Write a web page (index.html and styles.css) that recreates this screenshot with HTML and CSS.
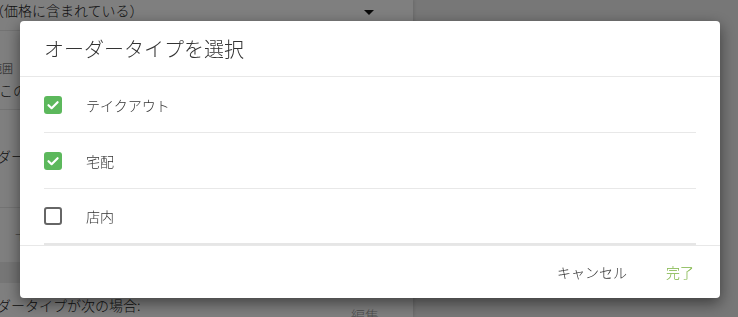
FILE: index.html
```html
<!DOCTYPE html>
<html lang="ja">
<head>
<meta charset="utf-8">
<title>オーダータイプを選択</title>
<link rel="stylesheet" href="styles.css">
</head>
<body>
<div class="app">
  <div class="page">
    <div class="row row-a">
      <span class="txt cut-a">（価格に含まれている）</span>
      <span class="caret"></span>
    </div>
    <div class="row row-b">
      <div class="label">範囲</div>
      <div class="txt cut-b">この</div>
    </div>
    <div class="row row-c">
      <div class="txt cut-c">オーダー</div>
    </div>
    <div class="row row-d">
      <div class="txt cut-d">十</div>
    </div>
    <div class="band"></div>
    <div class="row row-e">
      <div class="txt cut-c">オーダータイプが次の場合:</div>
      <div class="edit">編集</div>
    </div>
  </div>
</div>
<div class="backdrop"></div>
<div class="modal">
  <div class="modal-header">オーダータイプを選択</div>
  <div class="modal-list">
    <div class="item"><span class="cb on"><svg viewBox="0 0 18 18"><path d="M4.5 9.2 L7.6 12.2 L13.6 6.2"/></svg></span><span class="item-text">テイクアウト</span></div>
    <div class="item"><span class="cb on"><svg viewBox="0 0 18 18"><path d="M4.5 9.2 L7.6 12.2 L13.6 6.2"/></svg></span><span class="item-text">宅配</span></div>
    <div class="item"><span class="cb"></span><span class="item-text">店内</span></div>
  </div>
  <div class="modal-footer">
    <span class="btn cancel">キャンセル</span>
    <span class="btn done">完了</span>
  </div>
</div>
</body>
</html>
```
FILE: styles.css
```css
html, body {
  margin: 0;
  padding: 0;
}
body {
  width: 738px;
  height: 317px;
  overflow: hidden;
  background: #eeeeee;
  font-family: "Noto Sans CJK JP", "Noto Sans", sans-serif;
  color: #222;
}
.app {
  display: flex;
}
.page {
  width: 413px;
  height: 317px;
  background: #ffffff;
  overflow: hidden;
  display: flex;
  flex-direction: column;
  box-shadow: 1px 0 3px rgba(0,0,0,0.12);
}
.row {
  border-bottom: 1px solid #e6e6e6;
  display: flex;
  flex-direction: column;
  flex-shrink: 0;
}
.txt {
  font-size: 14px;
  line-height: 20px;
  white-space: nowrap;
  color: #222;
  font-weight: 300;
}
.row-a {
  height: 30px;
  flex-direction: row;
  justify-content: space-between;
}
.cut-a { margin-left: -10px; }
.caret {
  width: 0;
  height: 0;
  border-left: 5px solid transparent;
  border-right: 5px solid transparent;
  border-top: 5px solid #111;
  margin: 10px 39px 0 0;
}
.row-b {
  height: 48px;
  padding-top: 30px;
}
.label {
  font-size: 11px;
  line-height: 14px;
  color: #777;
  margin-left: -9px;
  margin-bottom: 5px;
}
.cut-b { margin-left: -1px; }
.row-c {
  height: 61px;
  padding-top: 36px;
}
.cut-c { margin-left: -31px; }
.row-d {
  height: 54px;
  justify-content: center;
  border-bottom: none;
}
.cut-d {
  margin-left: 15px;
  font-size: 11px;
  color: #555;
}
.band {
  height: 21px;
  background: #ececec;
  flex-shrink: 0;
}
.row-e {
  padding-top: 12px;
  border-bottom: none;
}
.edit {
  font-size: 14px;
  line-height: 20px;
  color: #999;
  margin: -10px 0 0 351px;
  font-weight: 300;
}
.backdrop {
  position: fixed;
  inset: 0;
  background: rgba(0,0,0,0.5);
}
.modal {
  position: fixed;
  top: 21px;
  left: 20px;
  width: 700px;
  height: 277px;
  background: #ffffff;
  border-radius: 4px;
  box-shadow: 0 5px 15px rgba(0,0,0,0.5);
  display: flex;
  flex-direction: column;
}
.modal-header {
  height: 55px;
  border-bottom: 1px solid #e8e8e8;
  padding-left: 24px;
  display: flex;
  align-items: center;
  font-size: 20px;
  font-weight: 300;
  color: #333;
}
.modal-list {
  border-bottom: 1px solid #e8e8e8;
}
.item {
  margin: 0 24px;
  height: 55px;
  border-bottom: 1px solid #e8e8e8;
  display: flex;
  align-items: center;
}
.item:last-child {
  border-bottom: 2px solid #e6e6e6;
  height: 54px;
}
.cb {
  width: 18px;
  height: 18px;
  box-sizing: border-box;
  border: 2px solid #666;
  border-radius: 3px;
  margin-right: 24px;
  display: flex;
}
.cb.on {
  border: none;
  background: #5cb85c;
}
.cb svg {
  width: 18px;
  height: 18px;
}
.cb svg path {
  fill: none;
  stroke: #fff;
  stroke-width: 2.2;
  stroke-linecap: round;
  stroke-linejoin: round;
}
.item-text {
  font-size: 14px;
  font-weight: 300;
  color: #333;
}
.modal-footer {
  flex: 1;
  display: flex;
  justify-content: flex-end;
  align-items: center;
  gap: 39px;
  padding-right: 26px;
}
.btn {
  font-size: 14px;
  line-height: 20px;
  font-weight: 300;
}
.cancel { color: #333; }
.done { color: #7cb342; }
```
